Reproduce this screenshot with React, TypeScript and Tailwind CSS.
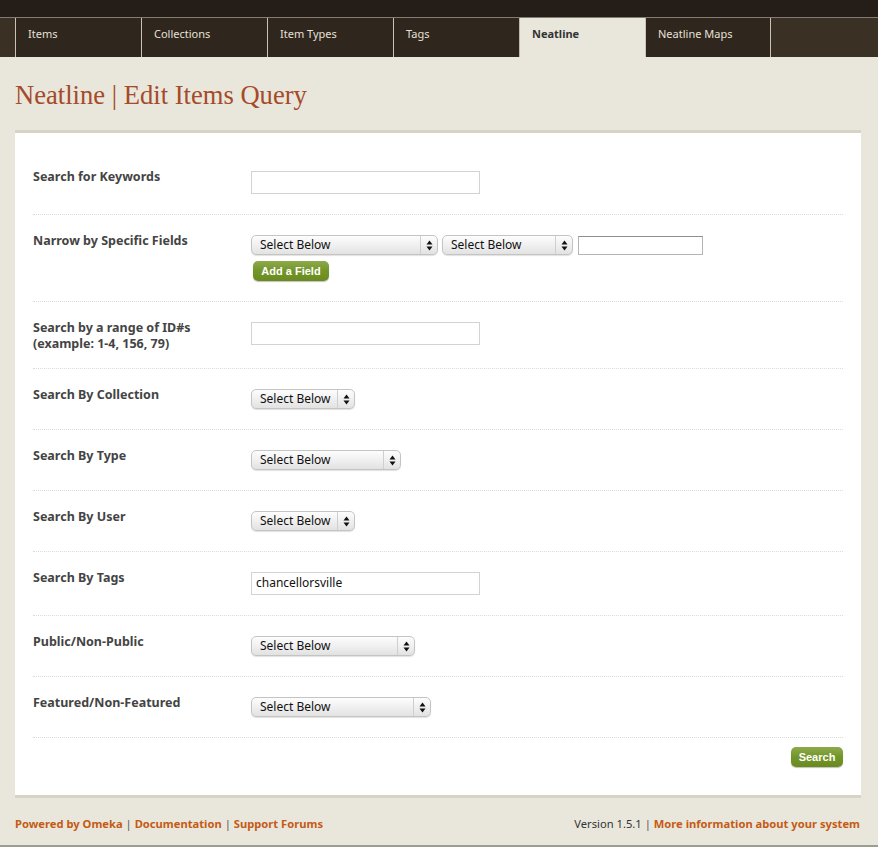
import React from 'react';

const tabs = ['Items', 'Collections', 'Item Types', 'Tags', 'Neatline', 'Neatline Maps'];

const sans = "font-['Noto_Sans','DejaVu_Sans',sans-serif]";

// Caja de selección estilo Mac antiguo
const FakeSelect = ({ width }: { width: number }) => (
  <div
    className="flex h-[20px] items-stretch rounded-[5px] border border-[#c4c4c0] bg-gradient-to-b from-[#fdfdfd] via-[#f0f0f0] to-[#e2e2e2] shadow-[0_1px_1px_rgba(0,0,0,0.12)]"
    style={{ width }}
  >
    <span className="flex-1 pl-[8px] text-[12px] leading-[18px] text-[#111] whitespace-nowrap overflow-hidden">
      Select Below
    </span>
    <span className="flex w-[17px] items-center justify-center border-l border-[#cfcfcb]">
      <svg width="7" height="11" viewBox="0 0 7 11">
        <path d="M3.5 0.5 L6.5 4.5 L0.5 4.5 Z" fill="#111" />
        <path d="M3.5 10.5 L6.5 6.5 L0.5 6.5 Z" fill="#111" />
      </svg>
    </span>
  </div>
);

const TextInput = ({ width, value = '' }: { width: number; value?: string }) => (
  <div
    className="h-[23px] border border-[#d3d3cf] bg-white px-[4px] text-[12px] leading-[20px] text-[#111]"
    style={{ width }}
  >
    {value}
  </div>
);

const GreenButton = ({ label, className = '' }: { label: string; className?: string }) => (
  <div
    className={`inline-flex h-[20px] items-center justify-center rounded-[5px] bg-gradient-to-b from-[#8eaa4a] via-[#739528] to-[#6a8a1f] px-[8px] text-[11px] font-bold text-white font-['Liberation_Sans',Arial,sans-serif] shadow-[0_1px_1px_rgba(0,0,0,0.25)] ${className}`}
  >
    {label}
  </div>
);

const Row = ({ label, children }: { label: React.ReactNode; children: React.ReactNode }) => (
  <div className="flex border-b border-dotted border-[#dcdcd6] py-[20px]">
    <div className="-mt-[2px] -mb-[4px] w-[218px] shrink-0 text-[12.5px] font-bold leading-[16px] text-[#444]">
      {label}
    </div>
    <div>{children}</div>
  </div>
);

export default function App() {
  return (
    <div className={`min-h-screen w-full bg-[#e9e7dc] ${sans}`}>
      {/* Barra superior */}
      <div className="h-[17px] bg-[#251d18]" />
      <div className="flex h-[40px] border-t border-[#837c73] bg-[#3a3024] pl-[15px]">
        {tabs.map((t, i) => (
          <div
            key={t}
            className={`flex w-[126px] items-start border-l pl-[12px] pt-[8px] text-[11px] ${
              t === 'Neatline'
                ? 'border-[#bdb8aa] bg-[#e9e7dc] font-bold text-[#333]'
                : 'border-[#c9c3b6] bg-[#2f261e] text-[#e6e1d6]'
            } ${i === tabs.length - 1 ? 'border-r' : ''}`}
          >
            {t}
          </div>
        ))}
      </div>

      {/* Título */}
      <h1 className="px-[15px] pt-[22px] pb-[19px] text-[26.6px] leading-[32px] text-[#a54a2a] font-['Liberation_Serif',Georgia,serif]">
        Neatline | Edit Items Query
      </h1>

      {/* Panel principal */}
      <div className="ml-[15px] mr-[17px] border-t-[3px] border-b-[3px] border-[#d7d4c5] bg-white px-[18px] pt-[18px] pb-[28px]">
        <Row label="Search for Keywords">
          <TextInput width={229} />
        </Row>
        <Row label="Narrow by Specific Fields">
          <div className="flex items-center gap-[4px]">
            <FakeSelect width={187} />
            <FakeSelect width={131} />
            <div className="ml-[1px] h-[19px] w-[125px] border border-[#b5b5b0] border-t-[#8e8e8a] bg-white" />
          </div>
          <GreenButton label="Add a Field" className="mt-[6px] ml-[2px] w-[76px]" />
        </Row>
        <Row
          label={
            <>
              Search by a range of ID#s
              <br />
              (example: 1-4, 156, 79)
            </>
          }
        >
          <TextInput width={229} />
        </Row>
        <Row label="Search By Collection">
          <FakeSelect width={104} />
        </Row>
        <Row label="Search By Type">
          <FakeSelect width={150} />
        </Row>
        <Row label="Search By User">
          <FakeSelect width={104} />
        </Row>
        <Row label="Search By Tags">
          <TextInput width={229} value="chancellorsville" />
        </Row>
        <Row label="Public/Non-Public">
          <FakeSelect width={164} />
        </Row>
        <Row label="Featured/Non-Featured">
          <FakeSelect width={180} />
        </Row>
        <div className="flex justify-end pt-[9px]">
          <GreenButton label="Search" className="w-[52px]" />
        </div>
      </div>

      {/* Pie */}
      <div className="flex justify-between pl-[15px] pr-[18px] pt-[18px] pb-[13px] text-[11.2px] leading-[16px]">
        <div className="font-bold text-[#c55a14]">
          Powered by Omeka <span className="font-normal text-[#555]">|</span> Documentation{' '}
          <span className="font-normal text-[#555]">|</span> Support Forums
        </div>
        <div className="text-[#333]">
          Version 1.5.1 <span className="text-[#555]">|</span>{' '}
          <span className="font-bold text-[#c55a14]">More information about your system</span>
        </div>
      </div>
      <div className="h-[4px] bg-[#9e9d92]" />
    </div>
  );
}
